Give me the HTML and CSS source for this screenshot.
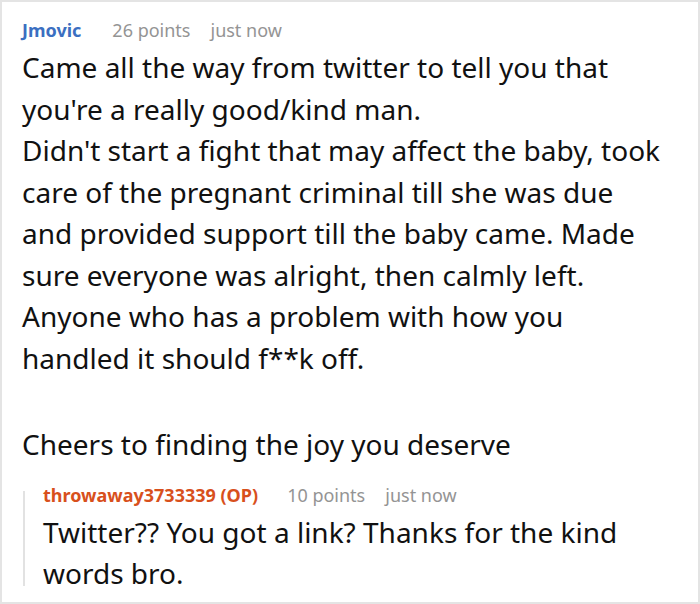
FILE: index.html
```html
<!DOCTYPE html>
<html>
<head>
<meta charset="utf-8">
<link rel="stylesheet" href="styles.css">
</head>
<body>
<div class="card">
  <div class="comment">
    <div class="meta">
      <span class="author">Jmovic</span>
      <span class="score">26 points</span>
      <span class="time">just now</span>
    </div>
    <div class="body">
      <p>Came all the way from twitter to tell you that you're a really good/kind man.<br>Didn't start a fight that may affect the baby, took care of the pregnant criminal till she was due and provided support till the baby came. Made sure everyone was alright, then calmly left.<br>Anyone who has a problem with how you handled it should f**k off.</p>
      <p>Cheers to finding the joy you deserve</p>
    </div>
    <div class="reply">
      <div class="meta">
        <span class="author op">throwaway3733339 (OP)</span>
        <span class="score">10 points</span>
        <span class="time">just now</span>
      </div>
      <div class="body">
        <p>Twitter?? You got a link? Thanks for the kind words bro.</p>
      </div>
    </div>
  </div>
</div>
</body>
</html>
```

FILE: styles.css
```css
* { box-sizing: border-box; }
html, body { margin: 0; padding: 0; background: #fff; }
.card {
  width: 700px;
  height: 604px;
  border: 2px solid #e4e4e4;
  overflow: hidden;
  font-family: "Noto Sans", "Open Sans", sans-serif;
  color: #111;
}
.comment { padding: 16px 34px 0 20px; }
.meta {
  display: flex;
  font-size: 18px;
  line-height: 24px;
  color: #949494;
  margin-bottom: 5px;
}
.author { font-weight: 700; color: #3b6fc1; margin-right: 31px; }
.author.op { color: #d8501c; margin-right: 29px; }
.score { margin-right: 20px; }
.body { font-size: 28px; line-height: 41.5px; }
.body p { margin: 0 0 45px 0; }
.body p:last-child { margin-bottom: 0; }
.reply {
  position: relative;
  margin-top: 17px;
  margin-left: 1px;
  padding-left: 20px;
}
.reply::before {
  content: "";
  position: absolute;
  left: 0;
  top: 8px;
  bottom: 9px;
  width: 2px;
  background: #e2e2e2;
}
```
